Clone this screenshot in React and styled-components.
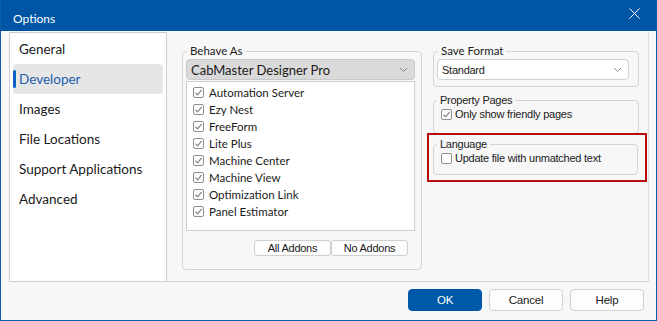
import React from 'react';
import styled, { createGlobalStyle } from 'styled-components';

const GlobalStyle = createGlobalStyle`
  html, body {
    margin: 0;
    padding: 0;
    background: #ffffff;
  }
  * {
    box-sizing: border-box;
  }
`;

const uiFont = `Lato, "Noto Sans", sans-serif`;
const classicFont = `"Liberation Sans", Arial, sans-serif`;

const Window = styled.div`
  width: 657px;
  height: 321px;
  border: 1px solid #0b5cad;
  border-top: none;
  background: #f7f7f7;
  display: flex;
  flex-direction: column;
  font-family: ${uiFont};
  color: #1a1a1a;
`;

const TitleBar = styled.div`
  height: 31px;
  background: #0055a5;
  color: #ffffff;
  display: flex;
  align-items: center;
  justify-content: space-between;
  padding: 6px 16px 0 12px;
  font-size: 12px;
`;

const CloseIcon = styled.svg`
  width: 11px;
  height: 11px;
  margin-top: -11px;
`;

const Body = styled.div`
  flex: 1;
  display: flex;
  flex-direction: column;
  padding: 1px 7px 0 8px;
`;

const Content = styled.div`
  height: 250px;
  display: flex;
  border-bottom: 1px solid #cfcfcf;
  border-right: 1px solid #e0e0e0;
`;

const Nav = styled.ul`
  width: 158px;
  margin: 0;
  padding: 1px 3px 0 3px;
  list-style: none;
  background: #ffffff;
  border: 1px solid #cfcfcf;
  border-bottom: none;
`;

const NavItem = styled.li`
  position: relative;
  height: 30px;
  display: flex;
  align-items: center;
  padding-left: 6px;
  font-size: 13.5px;
  border-radius: 4px;
  background: ${({ $active }) => ($active ? '#e6e6e6' : 'transparent')};
  color: ${({ $active }) => ($active ? '#1b5fae' : '#1a1a1a')};

  &::before {
    content: '';
    display: ${({ $active }) => ($active ? 'block' : 'none')};
    position: absolute;
    left: 0;
    top: 6px;
    width: 3px;
    height: 18px;
    border-radius: 2px;
    background: #0a63c4;
  }
`;

const Pane = styled.div`
  flex: 1;
  display: flex;
  gap: 11px;
  padding: 12px 0 0 15px;
`;

const Column = styled.div`
  display: flex;
  flex-direction: column;
  width: ${({ $width }) => $width}px;
`;

const Group = styled.fieldset`
  margin: ${({ $mt }) => $mt || 0}px 0 0 0;
  padding: ${({ $pad }) => $pad || '0 6px 6px 4px'};
  border: 1px solid #d4d4d4;
  border-radius: 4px;
  height: ${({ $height }) => ($height ? `${$height}px` : 'auto')};
  min-width: 0;
`;

const Legend = styled.legend`
  padding: 0 3px;
  margin-left: ${({ $classic }) => ($classic ? '-1px' : '1px')};
  font-size: ${({ $classic }) => ($classic ? '11px' : '11.5px')};
  letter-spacing: ${({ $classic }) => ($classic ? '-0.25px' : '0')};
  line-height: 14px;
  font-family: ${({ $classic }) => ($classic ? classicFont : uiFont)};
  color: #222;
`;

const Combo = styled.div`
  height: 21px;
  margin-top: 1px;
  display: flex;
  align-items: center;
  justify-content: space-between;
  padding: 0 6px 0 4px;
  border: 1px solid ${({ $gray }) => ($gray ? '#c8c8c8' : '#d0d0d0')};
  border-radius: 4px;
  background: ${({ $gray }) => ($gray ? '#dadada' : '#ffffff')};
  font-size: ${({ $classic }) => ($classic ? '11px' : '13px')};
  letter-spacing: ${({ $classic }) => ($classic ? '-0.25px' : '0')};
  font-family: ${({ $classic }) => ($classic ? classicFont : uiFont)};
  color: #1a1a1a;
`;

const Chevron = () => (
  <svg width="9" height="6" viewBox="0 0 9 6">
    <path d="M1 1 L4.5 4.5 L8 1" fill="none" stroke="#8a8a8a" strokeWidth="1" />
  </svg>
);

const ListBox = styled.div`
  height: 150px;
  margin-top: 1px;
  padding-top: 2px;
  background: #ffffff;
  border: 1px solid #d0d0d0;
`;

const ListRow = styled.div`
  height: 17px;
  display: flex;
  align-items: center;
  gap: 5px;
  padding-left: 6px;
  font-size: 11.5px;
  color: #1a1a1a;
`;

const Box = styled.span`
  width: 11px;
  height: 11px;
  flex: none;
  border: 1px solid #8f8f8f;
  border-radius: 2px;
  background: #ffffff;
  display: flex;
  align-items: center;
  justify-content: center;
`;

const Check = ({ checked }) => (
  <Box>
    {checked && (
      <svg width="9" height="9" viewBox="0 0 9 9">
        <path d="M1.5 4.8 L3.6 6.8 L7.6 2" fill="none" stroke="#8a8a8a" strokeWidth="1.2" />
      </svg>
    )}
  </Box>
);

const AddonRow = styled.div`
  display: flex;
  justify-content: flex-end;
  padding: 9px 7px 0 0;
`;

const SmallButton = styled.button`
  width: 77px;
  height: 16px;
  padding: 0;
  border: 1px solid #cfcfcf;
  border-radius: 3px;
  background: #fdfdfd;
  font-family: ${classicFont};
  font-size: 11px;
  letter-spacing: -0.25px;
  color: #1a1a1a;
  line-height: 14px;
`;

const OptionRow = styled.label`
  display: flex;
  align-items: center;
  gap: 3px;
  padding-left: 3px;
  margin-top: 1px;
  font-family: ${classicFont};
  font-size: 11px;
  letter-spacing: -0.25px;
  color: #1a1a1a;
`;

const Highlight = styled.div`
  margin: -1px -8px 0 -6px;
  padding: 2px 7px 5px 4px;
  border: 2px solid #b50d0d;
`;

const Footer = styled.div`
  flex: 1;
  display: flex;
  justify-content: flex-end;
  align-items: flex-start;
  gap: 7px;
  padding: 7px 5px 0 0;
`;

const DialogButton = styled.button`
  width: 74px;
  height: 22px;
  padding: 0;
  border-radius: 4px;
  border: 1px solid ${({ $primary }) => ($primary ? '#0058a8' : '#d0d0d0')};
  background: ${({ $primary }) => ($primary ? '#0058a8' : '#fdfdfd')};
  color: ${({ $primary }) => ($primary ? '#ffffff' : '#1a1a1a')};
  font-family: ${classicFont};
  font-size: 11.5px;
  letter-spacing: -0.2px;
`;

const navItems = ['General', 'Developer', 'Images', 'File Locations', 'Support Applications', 'Advanced'];
const addons = [
  'Automation Server',
  'Ezy Nest',
  'FreeForm',
  'Lite Plus',
  'Machine Center',
  'Machine View',
  'Optimization Link',
  'Panel Estimator',
];

export default function App() {
  return (
    <>
      <GlobalStyle />
      <Window>
        <TitleBar>
          <span>Options</span>
          <CloseIcon viewBox="0 0 11 11">
            <path d="M0.5 0.5 L10.5 10.5 M10.5 0.5 L0.5 10.5" stroke="#ffffff" strokeWidth="1" />
          </CloseIcon>
        </TitleBar>
        <Body>
          <Content>
            <Nav>
              {navItems.map((item) => (
                <NavItem key={item} $active={item === 'Developer'}>
                  {item}
                </NavItem>
              ))}
            </Nav>
            <Pane>
              <Column $width={240}>
                <Group $height={226} $pad="0 6px 6px 3px">
                  <Legend>Behave As</Legend>
                  <Combo $gray>
                    <span>CabMaster Designer Pro</span>
                    <Chevron />
                  </Combo>
                  <ListBox>
                    {addons.map((a) => (
                      <ListRow key={a}>
                        <Check checked />
                        <span>{a}</span>
                      </ListRow>
                    ))}
                  </ListBox>
                  <AddonRow>
                    <SmallButton>All Addons</SmallButton>
                    <SmallButton>No Addons</SmallButton>
                  </AddonRow>
                </Group>
              </Column>
              <Column $width={206}>
                <Group $height={43} $pad="0 9px 4px 3px">
                  <Legend>Save Format</Legend>
                  <Combo $classic>
                    <span>Standard</span>
                    <Chevron />
                  </Combo>
                </Group>
                <Group $height={41} $mt={6} $pad="0 6px 4px 4px">
                  <Legend $classic>Property Pages</Legend>
                  <OptionRow>
                    <Check checked />
                    <span>Only show friendly pages</span>
                  </OptionRow>
                </Group>
                <Highlight>
                  <Group $height={38} $pad="0 6px 4px 4px">
                    <Legend $classic>Language</Legend>
                    <OptionRow>
                      <Check />
                      <span>Update file with unmatched text</span>
                    </OptionRow>
                  </Group>
                </Highlight>
              </Column>
            </Pane>
          </Content>
          <Footer>
            <DialogButton $primary>OK</DialogButton>
            <DialogButton>Cancel</DialogButton>
            <DialogButton>Help</DialogButton>
          </Footer>
        </Body>
      </Window>
    </>
  );
}
